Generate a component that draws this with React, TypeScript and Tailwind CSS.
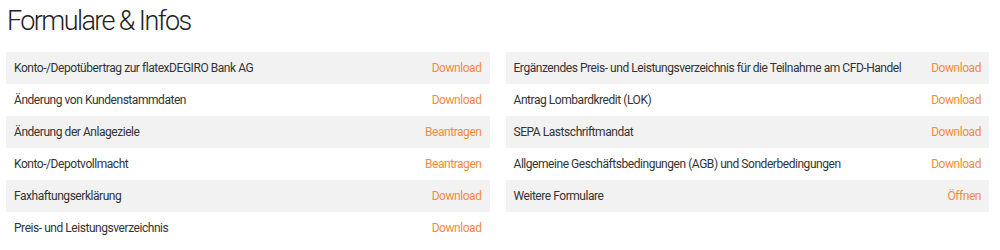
const leftItems = [
  { label: "Konto-/Depotübertrag zur flatexDEGIRO Bank AG", action: "Download" },
  { label: "Änderung von Kundenstammdaten", action: "Download" },
  { label: "Änderung der Anlageziele", action: "Beantragen" },
  { label: "Konto-/Depotvollmacht", action: "Beantragen" },
  { label: "Faxhaftungserklärung", action: "Download" },
  { label: "Preis- und Leistungsverzeichnis", action: "Download" },
];

const rightItems = [
  { label: "Ergänzendes Preis- und Leistungsverzeichnis für die Teilnahme am CFD-Handel", action: "Download" },
  { label: "Antrag Lombardkredit (LOK)", action: "Download" },
  { label: "SEPA Lastschriftmandat", action: "Download" },
  { label: "Allgemeine Geschäftsbedingungen (AGB) und Sonderbedingungen", action: "Download" },
  { label: "Weitere Formulare", action: "Öffnen" },
];

type Item = { label: string; action: string };

const FormList = ({ items }: { items: Item[] }) => (
  <ul>
    {items.map((item) => (
      <li
        key={item.label}
        className="flex h-8 items-center justify-between whitespace-nowrap px-2 odd:bg-[#f2f2f2]"
      >
        <span className="text-[#333]">{item.label}</span>
        <a href="#" className="text-[#f58a3c]">
          {item.action}
        </a>
      </li>
    ))}
  </ul>
);

export default function App() {
  return (
    <section
      className="w-[1000px] bg-white pl-[6px]"
      style={{ fontFamily: "Roboto, 'Liberation Sans', sans-serif" }}
    >
      <h1 className="pt-[3px] pl-[1px] text-[27px] font-light leading-[36px] tracking-[-1.6px] text-[#222]">
        Formulare &amp; Infos
      </h1>
      <div className="mt-[13px] grid w-[983px] grid-cols-2 gap-x-4 text-[12px] tracking-[-0.45px]">
        <FormList items={leftItems} />
        <FormList items={rightItems} />
      </div>
    </section>
  );
}
